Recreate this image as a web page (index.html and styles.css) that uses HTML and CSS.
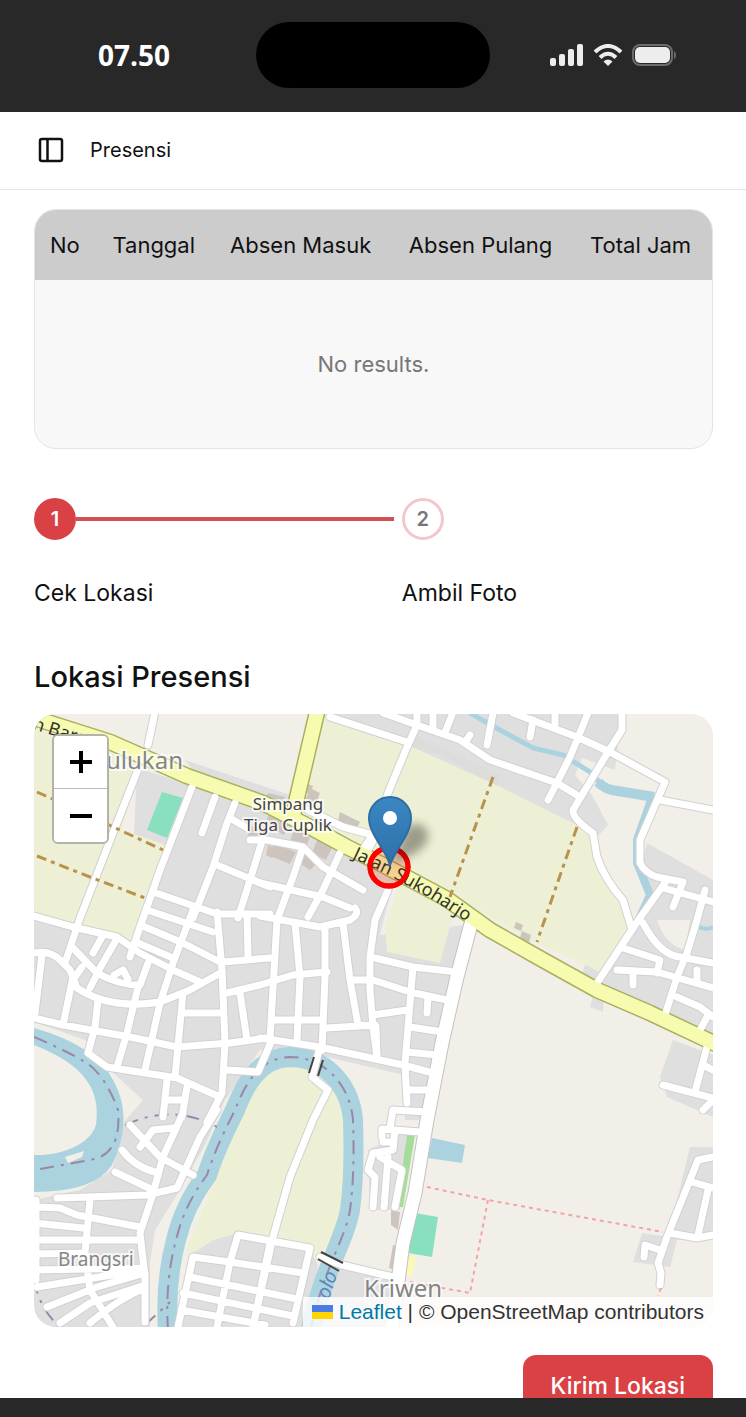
FILE: index.html
```html
<!DOCTYPE html>
<html lang="id">
<head>
  <meta charset="UTF-8">
  <meta name="viewport" content="width=device-width, initial-scale=1.0">
  <title>Presensi</title>
  <link rel="stylesheet" href="styles.css">
</head>
<body>
  <div class="statusbar">
    <span class="time">07.50</span>
    <div class="island"></div>
    <div class="status-icons">
      <svg width="34" height="22" viewBox="0 0 34 22" fill="#ededed">
        <rect x="0" y="14" width="6" height="8" rx="2"/>
        <rect x="9" y="10" width="6" height="12" rx="2"/>
        <rect x="18" y="5" width="6" height="17" rx="2"/>
        <rect x="27" y="0" width="6" height="22" rx="2"/>
      </svg>
      <svg width="30" height="22" viewBox="0 0 30 22" fill="none" stroke="#ededed" stroke-width="4">
        <path d="M2 8Q15 -4 28 8"/>
        <path d="M7 13.500Q15 6 23 13.500"/>
        <path d="M15 22L10.500 17.500Q15 13.500 19.500 17.500Z" fill="#ededed" stroke="none"/>
      </svg>
      <svg width="44" height="22" viewBox="0 0 44 22">
        <rect x="1" y="1" width="39" height="20" rx="7" fill="none" stroke="#6c6c6c" stroke-width="2"/>
        <rect x="3" y="3" width="35" height="16" rx="5" fill="#ededed"/>
        <path d="M42 7Q44 8 44 11T42 15Z" fill="#6c6c6c"/>
      </svg>
    </div>
  </div>

  <header class="topbar">
    <button class="sidebar-btn" type="button" aria-label="Toggle sidebar">
      <svg width="26" height="26" viewBox="0 0 26 26" fill="none" stroke="#111" stroke-width="2.500">
        <rect x="2" y="2" width="22" height="22" rx="2"/>
        <path d="M9.500 2V24"/>
      </svg>
    </button>
    <span>Presensi</span>
  </header>

  <main>
    <div class="table-box">
      <table>
        <thead>
          <tr>
            <th>No</th>
            <th>Tanggal</th>
            <th>Absen Masuk</th>
            <th>Absen Pulang</th>
            <th>Total Jam</th>
          </tr>
        </thead>
        <tbody>
          <tr>
            <td colspan="5">No results.</td>
          </tr>
        </tbody>
      </table>
    </div>

    <ol class="steps">
      <li>
        <div class="step-row">
          <button class="step-no active" type="button" aria-labelledby="step1">1</button>
          <div class="step-line"></div>
        </div>
        <p id="step1">Cek Lokasi</p>
      </li>
      <li>
        <div class="step-row">
          <button class="step-no" type="button" aria-labelledby="step2">2</button>
        </div>
        <p id="step2">Ambil Foto</p>
      </li>
    </ol>

    <h1>Lokasi Presensi</h1>

    <div class="map">
      <svg class="tiles" viewBox="34 714 679 613" preserveAspectRatio="xMidYMid slice">
        <defs>
          <linearGradient id="pin" x1="0" y1="0" x2="0" y2="1">
            <stop offset="0" stop-color="#3a86c4"/>
            <stop offset="1" stop-color="#2e71a8"/>
          </linearGradient>
          <filter id="soft" x="-50%" y="-50%" width="200%" height="200%">
            <feGaussianBlur stdDeviation="5"/>
          </filter>
          <g id="streets">
            <!-- north west -->
            <path d="M155 712L148 745M137 772L113 833L80 918L65 963M192 787L160 870L133 947L130 957M215 797L202 833M235 803L227 823L213 867L193 918M230 818L247 828M217 865L270 887M263 838L250 880L238 918M153 892L197 907L217 914H270"/>
            <path d="M147 910L213 932M145 927L183 943L220 962M138 943L173 958M34 916L73 927L117 937L140 953L173 970L200 982"/>
            <path d="M303 847L293 877L277 920M250 840H267L303 847L323 867L363 890M340 853L323 890L308 917M260 883L323 897L350 908M308 810L343 827L373 835L360 853"/>
            <path d="M388 890L375 920L370 957V990L373 1027L377 1057"/>
            <!-- north east -->
            <path d="M417 712V725L407 747L388 793L377 833L368 850M330 717L407 742M383 713L417 725L460 740L490 760L557 783L580 797M433 713V728M452 715L446 730M493 713L487 745M466 741L470 735"/>
            <path d="M513 713L577 737L610 752L665 782L640 840V863Q645 873 657 877L683 882L673 907M588 713L570 757L548 800M622 713V730L608 752L573 810Q572 818 593 833L597 857Q605 880 623 900L632 930"/>
            <path d="M660 800L713 810M533 720L530 737M555 713V724M667 880L637 922L597 983M663 888L713 902M705 890L697 920L687 953L677 977L665 1015M617 970L657 972L713 988M623 948L660 960L657 973M633 973V985M643 923Q660 955 680 957L713 963M677 997L700 1007L713 1017M707 1017L700 1030M697 970V980"/>
            <path d="M708 1043L695 1092M663 1085L713 1098M713 1100L703 1110M705 1066L713 1070M713 1157L698 1160L667 1237L658 1263L661 1273L660 1285M692 1182L713 1188M670 1233L697 1238L713 1235M708 1190L698 1235M660 1250L645 1245L644 1257"/>
            <!-- centre blocks -->
            <path d="M34 1018L63 1025L130 1037L177 1047L230 1043L267 1038M42 955L35 1013M34 953Q50 950 60 960L70 970L77 988Q110 1010 160 1002L190 990L222 972M73 977L63 1025M73 948L97 973Q118 985 140 985L148 963M102 937L93 953M115 942L100 968L90 988M82 967L73 980M114 975L123 970L128 979"/>
            <path d="M138 987L127 1033L117 1067M193 910L173 963L160 1003L145 1070M217 912L222 970L225 1043L222 1093L207 1122M247 914L248 957M223 962L270 958M227 993L260 985L293 975L327 972M240 993L247 1040M183 993L175 1077M183 1013H223M98 1000L95 1027L88 1053L107 1067L177 1078L220 1097M227 1070L258 1072L271 1042M167 1080L163 1117M187 1087L182 1117M167 1100H183"/>
            <path d="M260 916L320 927L350 920Q360 914 355 908M277 920L270 1040M295 923L300 977L297 1040M325 927V977L322 1050M273 1020H323M327 1028L375 1025M343 923L350 980L358 1025L376 1026L377 1057M352 980H373L410 992L447 1000M375 958L413 967L457 972M413 967L405 1063L407 1103M373 1015L407 1010M410 1027L443 1032M407 1052L437 1055M260 1038L320 1047L403 1065L433 1073M410 1090H427M428 997L427 1013M390 1128L393 1110L427 1112"/>
            <path d="M320 1047L312 1077L328 1090L313 1120L290 1177L273 1237L253 1327"/>
            <!-- Brangsri -->
            <path d="M217 1110L200 1137L177 1188L147 1195L57 1198M183 1113L163 1157L152 1197L140 1233L145 1277V1322M130 1125L160 1157L193 1175M140 1147L153 1130L173 1128M122 1150Q135 1167 155 1172M115 1172L153 1190M37 1207L60 1208L77 1215L140 1227M90 1200L85 1253L90 1290L113 1327M34 1223L83 1228M34 1240H140M34 1254L85 1253M34 1270L143 1268M37 1287L143 1270M47 1307L97 1287L145 1273M60 1323L90 1303L145 1285M90 1323Q120 1298 145 1288M36 1200V1280"/>
            <path d="M178 1327L193 1257L230 1262L303 1273M217 1327L230 1262L238 1235L310 1248L293 1323M270 1243L253 1327M190 1277L297 1299M183 1293L293 1316M181 1310L265 1325M320 1257L342 1265L393 1277M382 1137V1129L420 1132M373 1207L375 1177L368 1170L373 1153L393 1150L395 1130M384 1207L388 1157M395 1207L402 1170L380 1157M383 1142H393"/>
          </g>
          <g id="mainstreet">
            <path d="M472 920L457 977L442 1043L427 1120L415 1193L403 1243L392 1327"/>
          </g>
          <g id="highway">
            <path d="M28 716L47 722L110 742L187 776L263 803L310 827L347 847L387 867L447 899L490 930L543 960L597 990L650 1013L718 1045M318 708L293 815"/>
          </g>
          <path id="river" d="M168 1330C166 1300 168 1270 176 1240C182 1215 192 1195 207 1175C215 1150 225 1130 235 1110C245 1085 258 1058 290 1057C325 1057 350 1085 353 1120C354 1150 354 1180 350 1210C345 1240 325 1265 311 1328"/>
          <path id="jalan" d="M352 858L386 874L428 897L480 930"/>
        </defs>

        <rect x="34" y="714" width="679" height="613" fill="#f2efe9"/>

        <!-- residential areas -->
        <g fill="#e0dfdf">
          <path d="M137 768L240 800L330 840L395 875L380 935L465 925L430 1120L405 1120L404 1075L327 1057L260 1050L225 1100L205 1145L180 1190L155 1230L150 1262L150 1327H34V1200L80 1190L112 1170L124 1122L143 1100L110 1070L85 1040L34 1022V900L130 920Z"/>
          <path d="M335 712H622L615 770L582 758L575 775L592 795L608 825L597 837L573 825L500 787L403 743L325 718Z"/>
          <path d="M647 843L713 880V1035L665 1018L600 988L605 970L640 920L655 905L640 870Z"/>
          <path d="M673 1040L713 1055V1117L667 1097L660 1077ZM690 1147H713V1237L677 1240L670 1267L633 1262L642 1233L668 1237Z"/>
          <path d="M193 1253L213 1240L235 1233L310 1250L318 1265L310 1327H177ZM338 1268L395 1277V1327H320ZM368 1150L410 1130L400 1210H370Z"/>
          <path d="M585 964L605 975L603 1012L590 1007L595 990L582 975Z"/>
          <path d="M185 760L290 795L290 815L200 780Z"/>
        </g>
        <path d="M657 920L690 920L685 950Q665 945 657 920Z" fill="#f2efe9"/>

        <!-- farmland -->
        <g fill="#eef0d5">
          <path d="M34 718L60 725L137 765L122 830L166 845L133 945L117 935L73 925L34 912Z"/>
          <path d="M325 716L403 743L500 787L577 825L593 840L600 868L625 900L630 928L602 972L540 945L478 910L345 835L300 800Z"/>
          <path d="M400 882L385 925L387 952L440 963L455 908Z"/>
          <path d="M240 1120L262 1078L285 1064L315 1068L338 1090L345 1120L343 1200L332 1240L318 1257L275 1240L238 1233L213 1240L193 1253L186 1250Z"/>
        </g>
        <path d="M409 746L440 755L478 775L497 786L500 775L412 735Z" fill="#dcdcda"/>

        <!-- sports fields and parks -->
        <path d="M162 792L183 798L167 838L147 830ZM415 1213L438 1217L432 1257L408 1253Z" fill="#88e0be"/>
        <path d="M407 1135H415L403 1207H397Z" fill="#a5dc98"/>
        <path d="M408 1256H416L412 1277L405 1275Z" fill="#fbf9b8"/>

        <!-- water -->
        <path d="M34 1028Q95 1045 113 1080C130 1110 124 1140 112 1165Q95 1192 34 1192V1155C60 1156 90 1145 96 1125C101 1090 85 1065 34 1045Z" fill="#aad3df"/>
        <path d="M432 1138L465 1145L462 1163L428 1158Z" fill="#aad3df"/>
        <path d="M65 1157L84 1151L82 1157L68 1163Z" fill="#f2efe9"/>
        <g fill="none" stroke="#aad3df">
          <use href="#river" stroke-width="20"/>
          <path d="M470 713L500 730L533 748L563 755L590 772L602 785" stroke-width="5"/>
          <path d="M598 782Q605 790 618 791L654 797" stroke-width="10"/>
          <path d="M651 800L637 840V863L650 895L640 917" stroke-width="8"/>
          <path d="M698 926Q705 931 713 927" stroke-width="4"/>
        </g>
        <g fill="none" stroke="#9a86a8" stroke-width="2" stroke-dasharray="14 7 3 7">
          <use href="#river"/>
          <path d="M34 1037Q65 1050 85 1062T118 1110Q122 1155 90 1160L34 1170"/>
          <path d="M125 1125Q173 1103 217 1127M34 1280Q40 1310 60 1327M145 1325L170 1302"/>
        </g>

        <!-- buildings -->
        <g fill="#cdc4bd">
          <path d="M268 793L285 797L278 812L262 806ZM305 783L313 786L310 794L302 791ZM271 808L290 820L284 835L265 826ZM296 823L312 831L305 850L290 842ZM318 838L333 846L326 860L312 853ZM300 850L320 860L310 870L298 862ZM340 812L360 822L354 834L337 825ZM268 845L275 848L272 858L266 855Z"/>
          <path d="M274 843L296 852L290 864L270 856ZM310 788L320 793L316 804L306 799ZM250 826L268 832L264 840L248 836Z"/>
          <path d="M516 922L523 925L521 931L514 928ZM522 931L531 935L529 943L520 938ZM391 1210L400 1212L398 1230L391 1225ZM393 1245L397 1246L395 1270L389 1268Z"/>
        </g>

        <!-- roads -->
        <g fill="none" stroke-linecap="round" stroke-linejoin="round">
          <use href="#streets" stroke="#d2d0d0" stroke-width="9"/>
          <use href="#mainstreet" stroke="#c4c2c0" stroke-width="15"/>
          <use href="#highway" stroke="#a9b060" stroke-width="17"/>
          <use href="#streets" stroke="#fff" stroke-width="7"/>
          <use href="#mainstreet" stroke="#fff" stroke-width="13"/>
          <use href="#highway" stroke="#f6fbb0" stroke-width="14"/>
        </g>
        <path d="M314 1057L309 1073M323 1060L318 1076M321 1252L343 1263M318 1259L339 1271" stroke="#444" stroke-width="2"/>

        <!-- tracks and footpaths -->
        <path d="M37 792L55 800L163 850M37 856L90 877L145 898M493 777L450 897M577 827L555 890L537 942" fill="none" stroke="#b8924a" stroke-width="3" stroke-dasharray="10 5 4 5"/>
        <path d="M427 1187L488 1200L663 1232M488 1200L470 1293L410 1282M661 1288L658 1296" fill="none" stroke="#f4a3a3" stroke-width="2" stroke-dasharray="4 4"/>

        <!-- labels -->
        <g class="label">
          <text class="place" x="106" y="769">ulukan</text>
          <text class="place" x="364" y="1297">Kriwen</text>
          <text class="hamlet" x="58" y="1266">Brangsri</text>
          <text class="spot" x="288" y="810" text-anchor="middle">Simpang</text>
          <text class="spot" x="288" y="831" text-anchor="middle">Tiga Cuplik</text>
        </g>
        <text class="road" transform="translate(32 729) rotate(17)">n Barat</text>
        <text class="water" transform="translate(329 1300) rotate(-72)">olo</text>

        <!-- position marker -->
        <circle cx="389" cy="867" r="19" fill="#f30" fill-opacity=".2" stroke="red" stroke-width="5"/>
        <text class="road"><textPath href="#jalan">Jalan Sukoharjo</textPath></text>
        <circle cx="389" cy="867" r="19" fill="none" stroke="red" stroke-width="5"/>
        <path d="M392 864L404 830Q414 818 426 828Q434 842 414 854Z" fill="#000" fill-opacity=".35" filter="url(#soft)"/>
        <path d="M390 865C385 848 369 834 369 818A21 21 0 0 1 411 818C411 834 396 848 390 865Z" fill="url(#pin)" stroke="#2d6da3" stroke-width="2"/>
        <circle cx="390" cy="818" r="7" fill="#fff"/>
      </svg>

      <div class="zoom">
        <button type="button" aria-label="Zoom in">
          <svg width="22" height="22" viewBox="0 0 22 22"><path d="M0 11H22M11 0V22" stroke="#000" stroke-width="4"/></svg>
        </button>
        <button type="button" aria-label="Zoom out">
          <svg width="22" height="22" viewBox="0 0 22 22"><path d="M0 11H22" stroke="#000" stroke-width="4"/></svg>
        </button>
      </div>

      <div class="attribution">
        <a href="#">
          <svg width="21" height="14" viewBox="0 0 21 14"><path d="M0 0H21V7H0Z" fill="#4c7be1"/><path d="M0 7H21V14H0Z" fill="#ffd500"/></svg>
          Leaflet</a>
        | © OpenStreetMap contributors
      </div>
    </div>

    <button class="submit" type="button">Kirim Lokasi</button>
  </main>

  <div class="bottombar"></div>
</body>
</html>
```

FILE: styles.css
```css
* {
  box-sizing: border-box;
}
body {
  margin: 0;
  height: 100vh;
  display: flex;
  flex-direction: column;
  overflow: hidden;
  background: #fff;
  color: #111;
  font-family: Inter, "Liberation Sans", sans-serif;
  font-size: 23px;
}
button {
  font-family: inherit;
  cursor: pointer;
  padding: 0;
  border: none;
}
.statusbar {
  flex: none;
  height: 112px;
  padding-bottom: 2px;
  display: grid;
  grid-template-columns: 1fr 234px 1fr;
  align-items: center;
  background: #282828;
}
.time {
  padding-left: 98px;
  color: #fff;
  font-family: "Open Sans", sans-serif;
  font-size: 28px;
  font-weight: 700;
}
.island {
  height: 66px;
  border-radius: 33px;
  background: #000;
}
.status-icons {
  display: flex;
  justify-content: flex-end;
  gap: 9px;
  padding-right: 70px;
}
.topbar {
  flex: none;
  height: 78px;
  padding: 0 38px 2px;
  display: flex;
  align-items: center;
  gap: 26px;
  border-bottom: 1px solid #e5e5e5;
  font-size: 20px;
}
.sidebar-btn {
  display: flex;
  background: none;
}
main {
  flex: 1;
  min-height: 0;
  overflow: hidden;
  padding: 19px 33px 0 34px;
  display: flex;
  flex-direction: column;
}
.table-box {
  flex: none;
  border: 1px solid #e4e4e4;
  border-radius: 22px;
  overflow: hidden;
  background: #f8f8f8;
}
table {
  width: 100%;
  border-collapse: collapse;
  font-size: 22px;
}
th {
  height: 70px;
  padding: 0 15px;
  background: #ccc;
  font-weight: 400;
  text-align: left;
  white-space: nowrap;
}
td {
  height: 168px;
  color: #777;
  text-align: center;
}
.steps {
  flex: none;
  list-style: none;
  margin: 49px 0 0;
  padding: 0;
  display: grid;
  grid-template-columns: 13fr 11fr;
}
.step-row {
  display: flex;
  align-items: center;
}
.step-no {
  width: 42px;
  height: 42px;
  border-radius: 50%;
  border: 3px solid #f3c6cb;
  background: #fff;
  color: #777;
  font-size: 20px;
  font-weight: 600;
}
.step-no.active {
  border-color: #da4144;
  background: #da4144;
  color: #fff;
}
.step-line {
  flex: 1;
  height: 4px;
  margin-right: 8px;
  background: #d05053;
}
.steps p {
  margin: 38px 0 0;
  line-height: 30px;
}
h1 {
  margin: 50px 0 18px;
  font-size: 29px;
  font-weight: 500;
  line-height: 38px;
}
.map {
  flex: none;
  position: relative;
  aspect-ratio: 679 / 613;
  border-radius: 22px;
  overflow: hidden;
}
.tiles {
  display: block;
  width: 100%;
  height: 100%;
}
.tiles text {
  font-family: "Noto Sans", sans-serif;
  paint-order: stroke;
}
.label text {
  stroke: #fff;
  stroke-opacity: 0.7;
  stroke-width: 4px;
}
.tiles .place {
  font-size: 24px;
  fill: #858585;
}
.tiles .hamlet {
  font-size: 19px;
  fill: #858585;
}
.tiles .spot {
  font-size: 17px;
  fill: #444;
}
.tiles .road {
  font-size: 18px;
  fill: #333;
}
.tiles .water {
  font-size: 20px;
  font-style: italic;
  fill: #5b89b8;
}
.zoom {
  position: absolute;
  top: 20px;
  left: 18px;
  display: flex;
  flex-direction: column;
  border: 2px solid #b3b3ab;
  border-radius: 6px;
  overflow: hidden;
}
.zoom button {
  width: 53px;
  height: 53px;
  display: flex;
  align-items: center;
  justify-content: center;
  background: #fff;
}
.zoom button:first-child {
  border-bottom: 1px solid #bbb;
}
.attribution {
  position: absolute;
  right: 0;
  bottom: 0;
  padding: 0 9px;
  background: rgba(255, 255, 255, 0.8);
  color: #333;
  font-family: "Liberation Sans", Arial, sans-serif;
  font-size: 21px;
  line-height: 30px;
}
.attribution a {
  color: #0078a8;
  text-decoration: none;
}
.submit {
  flex: none;
  align-self: flex-end;
  margin-top: 28px;
  padding: 0 28px;
  height: 62px;
  border-radius: 13px;
  background: #da4144;
  color: #fff;
  font-size: 23px;
  font-weight: 500;
}
.bottombar {
  flex: none;
  height: 19px;
  background: #282828;
}
```
